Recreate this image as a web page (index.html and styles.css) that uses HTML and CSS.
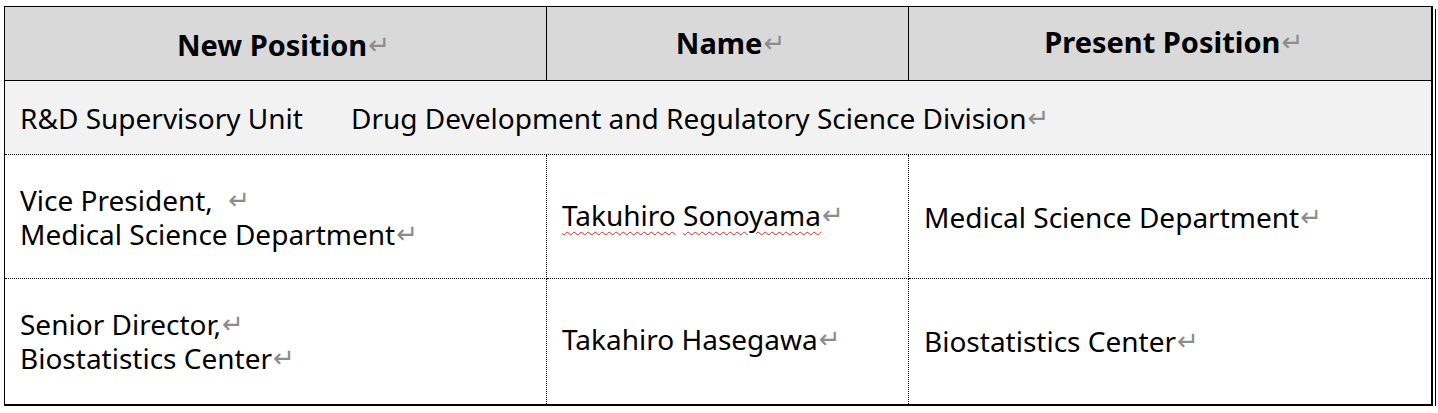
FILE: index.html
```html
<!DOCTYPE html>
<html lang="en">
<head>
<meta charset="utf-8">
<title>Personnel changes</title>
<link rel="stylesheet" href="styles.css">
</head>
<body>
<table class="tbl">
  <colgroup>
    <col class="c1">
    <col class="c2">
    <col class="c3">
  </colgroup>
  <thead>
    <tr class="head">
      <th class="h1">New Position<span class="pm">↵</span></th>
      <th class="h2">Name<span class="pm">↵</span></th>
      <th class="h3">Present Position<span class="pm">↵</span></th>
    </tr>
  </thead>
  <tbody>
    <tr class="unit">
      <td colspan="3"><span class="tab">R&amp;D Supervisory Unit</span>Drug Development and Regulatory Science Division<span class="pm">↵</span></td>
    </tr>
    <tr class="row r1">
      <td>Vice President, <span class="pm pm-sp">↵</span><br>Medical Science Department<span class="pm">↵</span></td>
      <td class="name"><span class="sp">Takuhiro</span> <span class="sp">Sonoyama</span><span class="pm">↵</span></td>
      <td class="pres">Medical Science Department<span class="pm">↵</span></td>
    </tr>
    <tr class="row r2">
      <td>Senior Director,<span class="pm">↵</span><br>Biostatistics Center<span class="pm">↵</span></td>
      <td class="name">Takahiro Hasegawa<span class="pm">↵</span></td>
      <td class="pres">Biostatistics Center<span class="pm">↵</span></td>
    </tr>
  </tbody>
</table>
</body>
</html>
```

FILE: styles.css
```css
html, body {
  margin: 0;
  padding: 0;
  background: #ffffff;
}

body {
  padding: 6px 0 0 4px;
  font-family: "Noto Sans", "Open Sans", "DejaVu Sans", sans-serif;
  color: #000;
}

.tbl {
  border-collapse: collapse;
  table-layout: fixed;
  width: 1427px;
  border-top: 1px solid #000;
  border-left: 1px solid #000;
  border-right: 2px solid #000;
  border-bottom: 2px solid #000;
  box-shadow: 2px 2px 0 0 #fff, 3px 3px 0 0 #000;
  font-size: 28px;
  line-height: 34px;
}

.tbl th,
.tbl td {
  box-sizing: border-box;
}

.c1 { width: 542px; }
.c2 { width: 362px; }
.c3 { width: 523px; }

.head th {
  height: 74px;
  padding: 0;
  background: #d9d9d9;
  font-weight: 700;
  font-size: 29px;
  line-height: 34px;
  text-align: center;
  vertical-align: middle;
  border-bottom: 1px solid #000;
  border-right: 1px solid #000;
}
.head th:last-child { border-right: none; }

.head .h1 { padding: 2px 0 0 16px; }
.head .h2 { padding: 0 0 2px 6px; }
.head .h3 { padding: 0 0 4px 8px; }

.unit td {
  height: 74px;
  padding: 0 0 0 15px;
  background: #f2f2f2;
  vertical-align: middle;
  border-bottom: 1px dotted #000;
}

.tab {
  display: inline-block;
  width: 331px;
}

.row td {
  padding: 0 0 0 15px;
  vertical-align: middle;
  border-right: 1px dotted #000;
}
.row td:last-child { border-right: none; }

.r1 td {
  height: 124px;
  border-bottom: 1px dotted #000;
}
.r2 td {
  height: 126px;
}

.row td.name { padding-bottom: 4px; }

.sp {
  text-decoration: underline wavy #e8221c;
  text-decoration-thickness: 1px;
  text-underline-offset: 5px;
}

.pm {
  font-family: "DejaVu Sans", sans-serif;
  font-size: 26px;
  font-weight: 400;
  color: #8c8c8c;
  margin-left: 1px;
  vertical-align: 2px;
}

.pm-sp { margin-left: 8px; }
```
